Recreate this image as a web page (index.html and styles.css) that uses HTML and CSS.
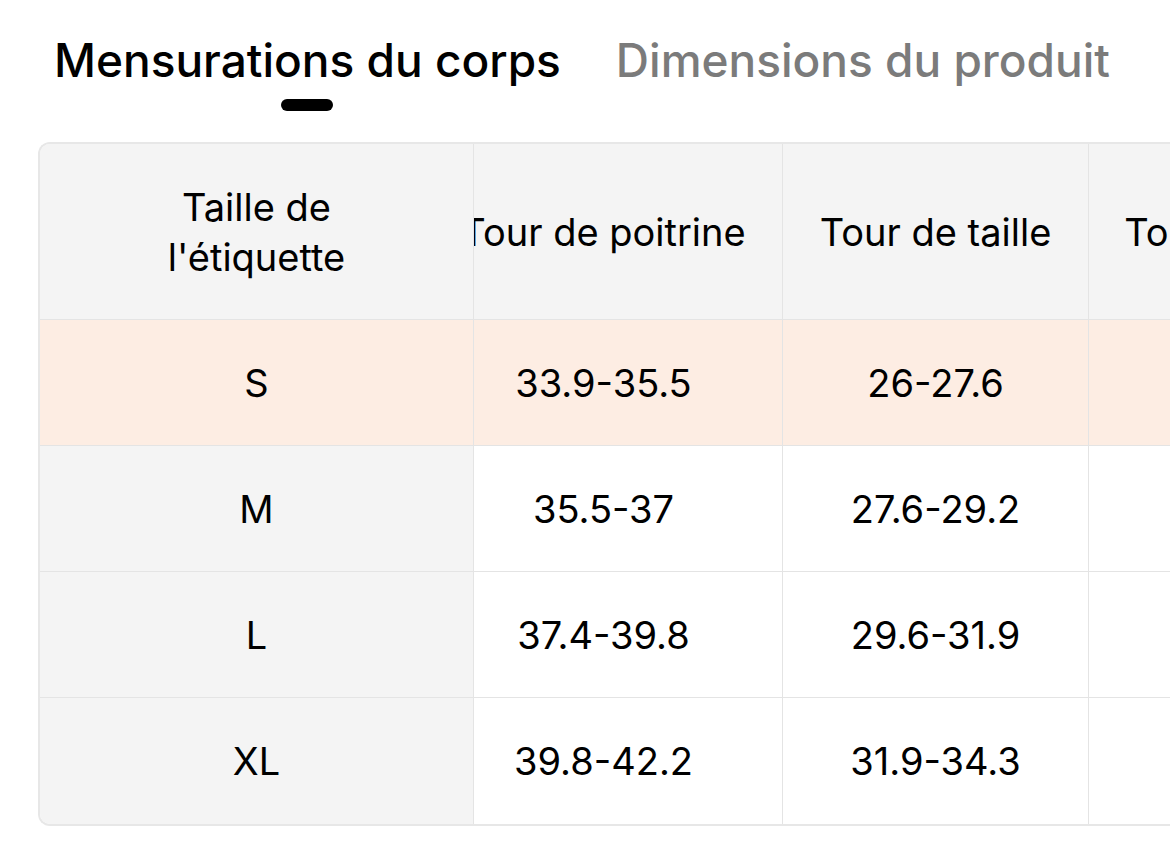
FILE: index.html
```html
<!DOCTYPE html>
<html lang="fr">
<head>
<meta charset="utf-8">
<title>Guide des tailles</title>
<link rel="stylesheet" href="styles.css">
</head>
<body>
<div class="page">
  <div class="tabs">
    <div class="tab tab-active">
      <span class="tab-label">Mensurations du corps</span>
      <span class="indicator"></span>
    </div>
    <div class="tab">
      <span class="tab-label">Dimensions du produit</span>
    </div>
  </div>

  <div class="size-table">
    <div class="fixed-col">
      <div class="cell head">Taille de<br>l'étiquette</div>
      <div class="cell row-s">S</div>
      <div class="cell">M</div>
      <div class="cell">L</div>
      <div class="cell last">XL</div>
    </div>
    <div class="scroll-view">
      <div class="scroll-track">
        <div class="col col-chest">
          <div class="cell head">Tour de poitrine</div>
          <div class="cell row-s num">33.9-35.5</div>
          <div class="cell num">35.5-37</div>
          <div class="cell num">37.4-39.8</div>
          <div class="cell num last">39.8-42.2</div>
        </div>
        <div class="col col-waist">
          <div class="cell head">Tour de taille</div>
          <div class="cell row-s num">26-27.6</div>
          <div class="cell num">27.6-29.2</div>
          <div class="cell num">29.6-31.9</div>
          <div class="cell num last">31.9-34.3</div>
        </div>
        <div class="col col-hips">
          <div class="cell head">Tour de hanches</div>
          <div class="cell row-s num">35.9-37.5</div>
          <div class="cell num">37.5-39</div>
          <div class="cell num">39.4-41.8</div>
          <div class="cell num last">41.8-44.2</div>
        </div>
      </div>
    </div>
  </div>
</div>
</body>
</html>
```

FILE: styles.css
```css
* { box-sizing: border-box; }

html, body {
  margin: 0;
  padding: 0;
  background: #ffffff;
  overflow: hidden;
}

body {
  width: 1170px;
  height: 851px;
  font-family: Inter, "Liberation Sans", sans-serif;
  color: #000;
}

.page {
  padding-top: 34px;
  padding-left: 38px;
}

.tabs {
  display: flex;
  gap: 55px;
  padding-left: 16px;
  height: 108px;
}

.tab {
  display: flex;
  flex-direction: column;
  align-items: center;
}

.tab-label {
  font-size: 46px;
  font-weight: 500;
  line-height: 52px;
  color: #7b7b7b;
  white-space: nowrap;
}

.tab-active .tab-label {
  color: #000;
}

.indicator {
  margin-top: 13px;
  width: 52px;
  height: 12px;
  border-radius: 6px;
  background: #000;
}

.size-table {
  display: flex;
  width: 1200px;
  border: 2px solid #e7e7e7;
  border-right: none;
  border-radius: 12px 0 0 12px;
  overflow: hidden;
}

.fixed-col {
  width: 434px;
  flex: none;
  background: #f4f4f4;
  border-right: 1px solid #e4e4e4;
}

.scroll-view {
  flex: 1;
  overflow: hidden;
}

.scroll-track {
  display: flex;
  margin-left: -49px;
}

.col {
  flex: none;
  border-right: 1px solid #e4e4e4;
}

.col-chest { width: 358px; }
.col-waist { width: 306px; }
.col-hips { width: 372px; }

.cell {
  height: 126px;
  display: flex;
  align-items: center;
  justify-content: center;
  text-align: center;
  font-size: 38px;
  line-height: 50px;
  border-bottom: 1px solid #e4e4e4;
  white-space: nowrap;
}

.cell.head {
  height: 176px;
  background: #f4f4f4;
}

.cell.last {
  border-bottom: none;
}

.cell.row-s {
  background: #fdede3;
}
```
